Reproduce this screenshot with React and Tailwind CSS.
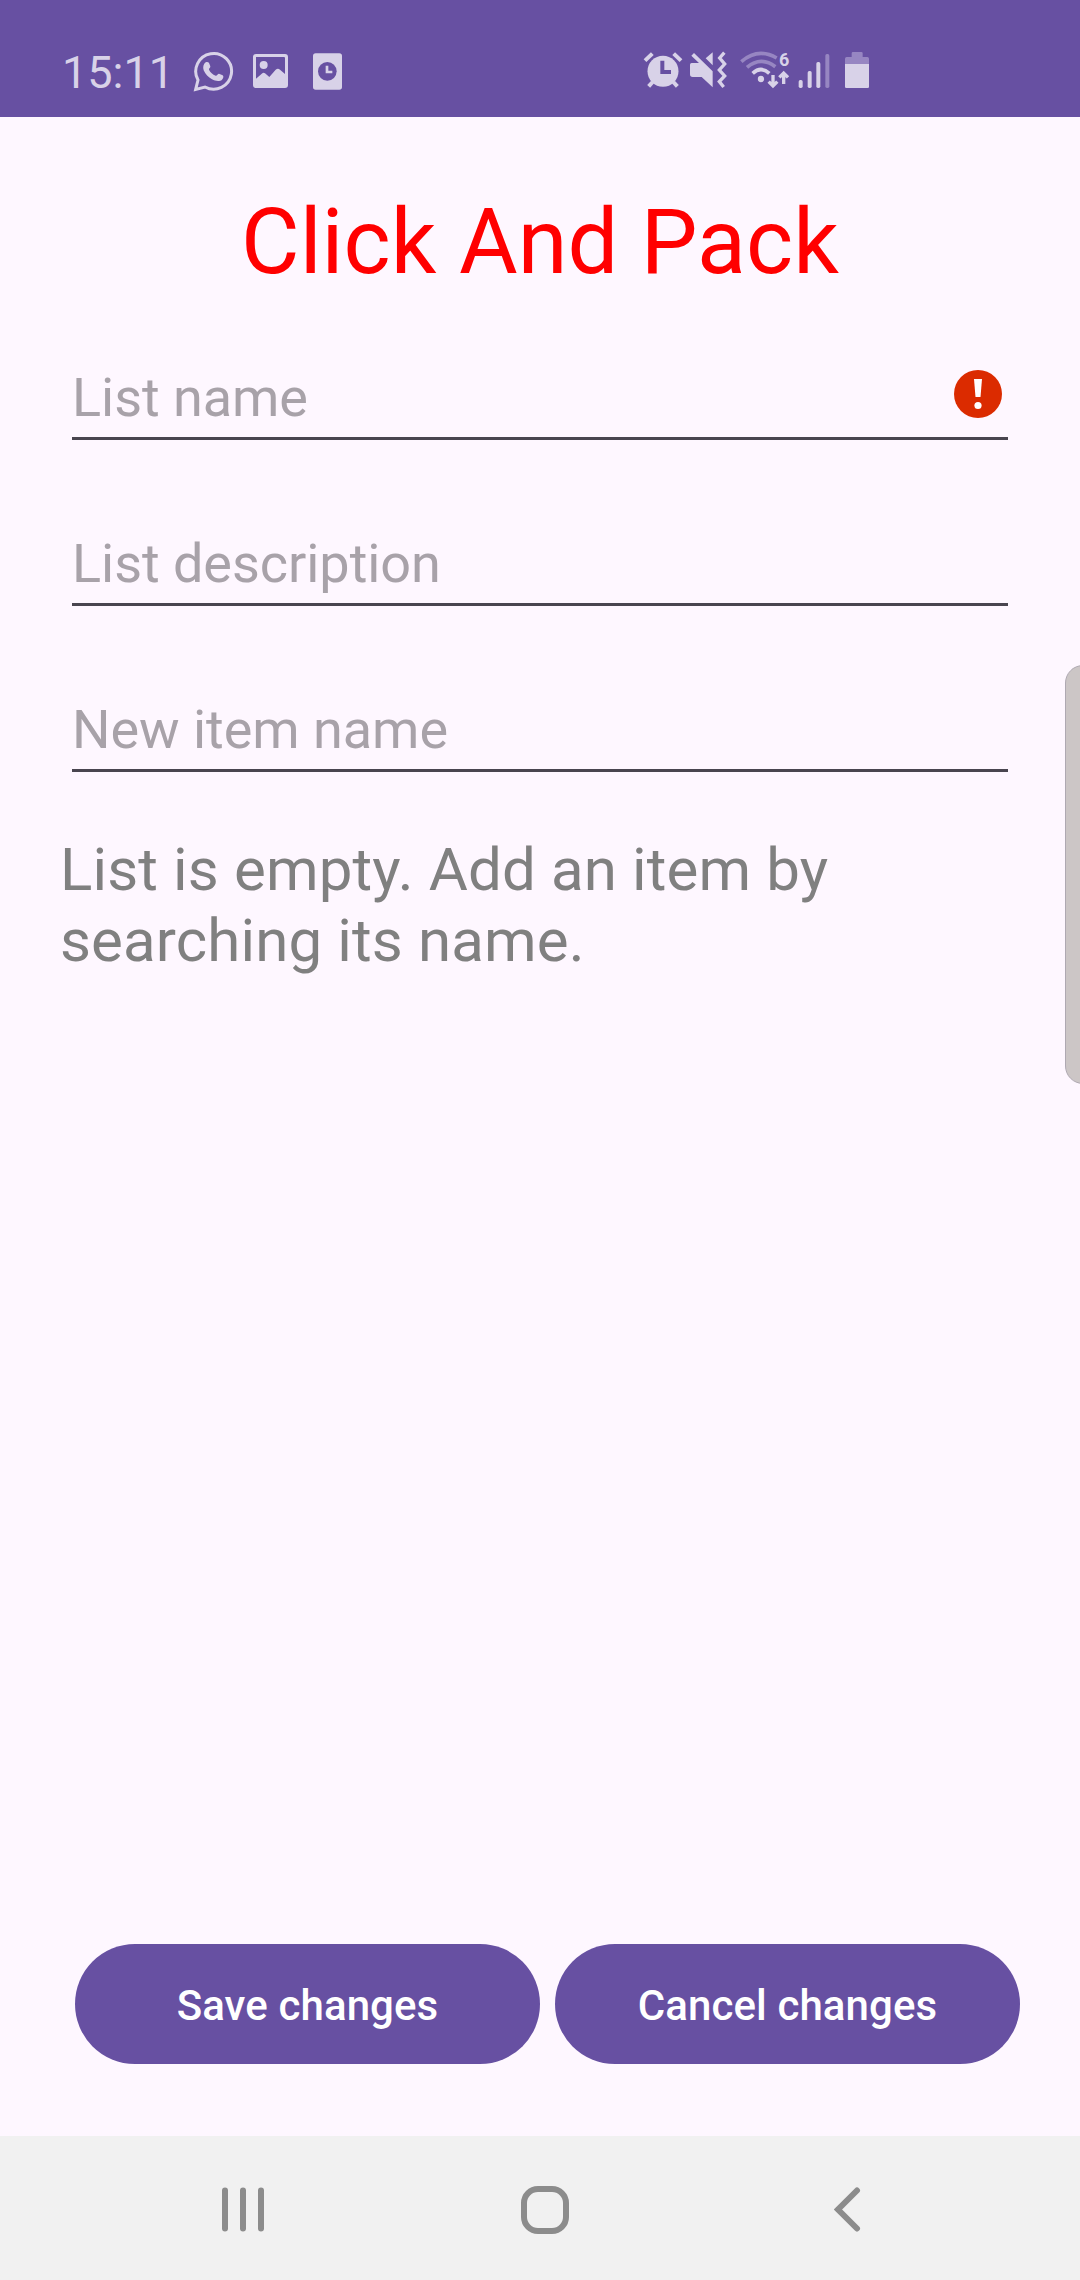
const ICON = "#d8d2e8";
const DIM = "#9786c2";

function WhatsAppIcon() {
  return (
    <svg className="ml-7 h-[42px] w-[42px] shrink-0" viewBox="456 60 126 126" fill="none">
      <path
        d="M467 178 L474 150 A53.7 53.7 0 1 1 495 171 Z"
        stroke={ICON}
        strokeWidth="9"
        strokeLinejoin="miter"
      />
      <path
        d="M497 97 C503 94 507 97 508 101 L511 109 C512 113 506 116 507 119 C511 127 518 133 527 137 C531 138 533 131 537 131 L548 136 C552 139 550 145 546 149 C538 156 526 153 516 148 C505 142 496 132 491 121 C488 112 490 102 497 97 Z"
        fill={ICON}
      />
    </svg>
  );
}

function PictureIcon() {
  return (
    <svg className="ml-[18px] h-[42px] w-[38px] shrink-0" viewBox="636 60 114 126">
      <path
        fillRule="evenodd"
        fill={ICON}
        d="M648 72 H735 Q744 72 744 81 V165 Q744 174 735 174 H648 Q639 174 639 165 V81 Q639 72 648 72 Z M648 81 V146 L667 130 Q671 127 675 130 L688 141 L707 119 Q714 113 720 119 L735 132 V84 Q735 81 732 81 Z"
      />
      <circle cx="671" cy="105" r="12" fill={ICON} />
    </svg>
  );
}

function ClockCardIcon() {
  return (
    <svg className="ml-[22px] h-[42px] w-[31px] shrink-0" viewBox="816 60 93 126">
      <rect x="819" y="70" width="87" height="109" rx="8" fill={ICON} />
      <circle cx="862" cy="124" r="28" fill="#6750a2" />
      <path d="M861 107 V126 H877" fill="none" stroke={ICON} strokeWidth="8" />
    </svg>
  );
}

function AlarmIcon() {
  return (
    <svg className="h-[42px] w-[40px] shrink-0" viewBox="39 60 120 126" fill="none">
      <g stroke={ICON} strokeWidth="12">
        <path d="M45 92 L67 71" />
        <path d="M153 92 L131 71" />
        <path d="M68 156 L56 169" />
        <path d="M130 156 L142 169" />
      </g>
      <circle cx="99" cy="124" r="46.500" fill={ICON} />
      <path d="M97 92 V126 H123" stroke="#6750a2" strokeWidth="12" />
    </svg>
  );
}

function MutedVibrateIcon() {
  return (
    <svg className="ml-1.5 h-[42px] w-[38px] shrink-0" viewBox="177 60 114 126" fill="none">
      <path d="M180 104 Q180 99 185 99 H207 L184 77 L192 69 L248 124 V172 L215 141 H188 Q180 141 180 133 Z" fill={ICON} />
      <path d="M227 85 L248 67 V106 Z" fill={ICON} />
      <path d="M283 68 L269 84 L284 102 L268 120 L284 138 L268 155 L281 171" stroke={ICON} strokeWidth="10" />
    </svg>
  );
}

function WifiIcon() {
  return (
    <svg className="ml-[13px] h-[42px] w-[50px] shrink-0" viewBox="330 60 150 126" fill="none">
      <path d="M334 95 Q384 52 440 84" stroke={DIM} strokeWidth="11" />
      <path d="M351 112 Q392 77 436 110" stroke={DIM} strokeWidth="11" />
      <path d="M368 130 Q393 107 418 130" stroke={ICON} strokeWidth="11" />
      <circle cx="393" cy="147" r="9.500" fill={ICON} />
      <path d="M429 135 V166 M416 155 L429 168 L442 155" stroke={ICON} strokeWidth="10" />
      <path d="M461 162 V130 M448 142 L461 129 L474 142" stroke={ICON} strokeWidth="10" />
      <text x="447" y="109" fontFamily="Roboto, sans-serif" fontWeight="700" fontSize="54" fill={ICON}>
        6
      </text>
    </svg>
  );
}

function SignalIcon() {
  return (
    <svg className="ml-2 h-[42px] w-[32px] shrink-0" viewBox="504 60 96 126">
      <rect x="506" y="150" width="12" height="24" rx="5" fill={ICON} />
      <rect x="533" y="123" width="12" height="51" rx="5" fill={ICON} />
      <rect x="559" y="96" width="12" height="78" rx="5" fill={ICON} />
      <rect x="586" y="72" width="12" height="102" rx="5" fill={DIM} />
    </svg>
  );
}

function BatteryIcon() {
  return (
    <svg className="ml-[15px] h-[42px] w-6 shrink-0" viewBox="645 60 72 126">
      <path d="M645 102 V86 Q645 81 650 81 H665 V70 Q665 66 669 66 H694 Q698 66 698 70 V81 H712 Q717 81 717 86 V102 Z" fill={DIM} />
      <path d="M645 102 H717 V170 Q717 174 713 174 H649 Q645 174 645 170 Z" fill={ICON} />
    </svg>
  );
}

function StatusBar() {
  return (
    <header className="flex h-[117px] shrink-0 justify-between bg-[#6750a2] pt-[50px] pr-[211px] pl-[62px]">
      <div className="flex">
        <span className="w-[102px] text-[45px] leading-[45px] whitespace-nowrap text-[#d8d2e8]">15:11</span>
        <WhatsAppIcon />
        <PictureIcon />
        <ClockCardIcon />
      </div>
      <div className="flex">
        <AlarmIcon />
        <MutedVibrateIcon />
        <WifiIcon />
        <SignalIcon />
        <BatteryIcon />
      </div>
    </header>
  );
}

function ErrorIcon() {
  return (
    <svg className="mr-1.5 h-12 w-12" viewBox="0 0 48 48">
      <circle cx="24" cy="24" r="24" fill="#db2b00" />
      <path d="M20 9 H28 L26.500 27 H21.500 Z" fill="#fff" />
      <circle cx="24" cy="35.500" r="3.600" fill="#fff" />
    </svg>
  );
}

function Field({ label, error }) {
  return (
    <div className="flex h-[74px] items-start justify-between border-b-[3px] border-[#49454f]">
      <span className="text-[54px] leading-[64px] tracking-[-0.04px] text-[#a8a2a9]">{label}</span>
      {error && (
        <div className="pt-1">
          <ErrorIcon />
        </div>
      )}
    </div>
  );
}

function PillButton({ children }) {
  return (
    <button className="h-[120px] flex-1 rounded-full bg-[#6750a2] pt-[3px] text-[42px] leading-[50px] font-medium tracking-[0.1px] text-white">
      {children}
    </button>
  );
}

function NavBar() {
  return (
    <nav className="flex h-36 shrink-0 items-center bg-[#f1f1f1] pt-1 pl-[221px]">
      <svg className="h-12 w-11" viewBox="0 0 44 48" stroke="#8c8c8c" strokeWidth="6" strokeLinecap="round">
        <path d="M4 4.500 V42.500 M22 4.500 V42.500 M40 4.500 V42.500" />
      </svg>
      <div className="ml-64 h-12 w-12 rounded-[17px] border-6 border-[#8c8c8c]" />
      <svg className="ml-[265px] h-12 w-7" viewBox="0 0 28 48" fill="none" stroke="#8c8c8c" strokeWidth="6" strokeLinecap="round">
        <path d="M23 4.500 L4 23.500 L23 42.500" />
      </svg>
    </nav>
  );
}

export default function App() {
  return (
    <div className="relative flex h-[2280px] w-[1080px] flex-col overflow-hidden bg-[#fef7ff] font-['Roboto',sans-serif]">
      <StatusBar />
      <main className="flex flex-1 flex-col">
        <h1 className="pt-[73px] text-center text-[90px] leading-[106px] tracking-[0.08px] text-[#ff0000]">Click And Pack</h1>
        <div className="mt-[70px] flex flex-col gap-[92px] px-[72px]">
          <Field label="List name" error />
          <Field label="List description" />
          <Field label="New item name" />
        </div>
        <p className="mt-[62px] px-[60px] text-[60px] leading-[71px] tracking-[0.14px] text-[#808080]">
          List is empty. Add an item by searching its name.
        </p>
        <div className="mt-auto mb-[72px] flex gap-[15px] pr-[60px] pl-[75px]">
          <PillButton>Save changes</PillButton>
          <PillButton>Cancel changes</PillButton>
        </div>
      </main>
      <NavBar />
      <div className="absolute top-[665px] left-[1065px] h-[419px] w-10 rounded-[18px] border border-[#afa9b2] bg-[#ccc6c6]" />
    </div>
  );
}
